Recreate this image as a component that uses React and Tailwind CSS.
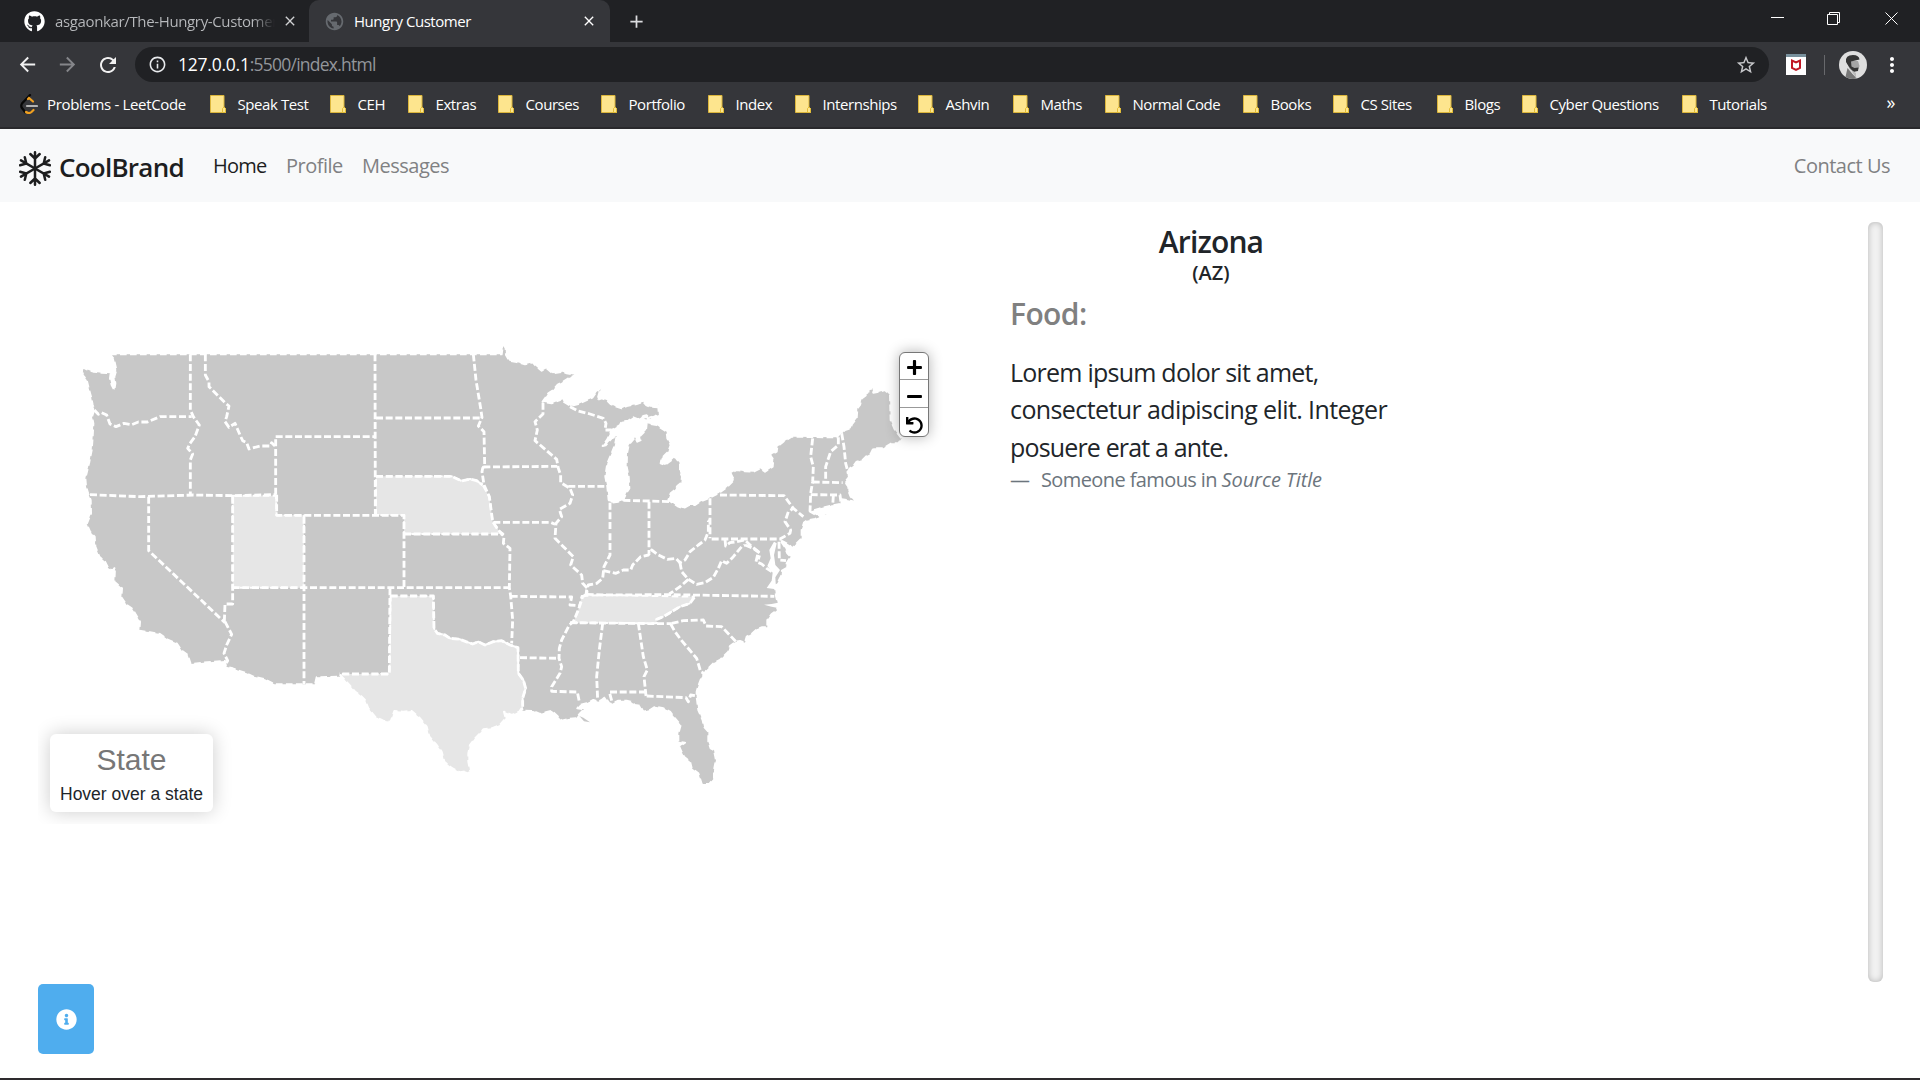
import { FaGithub, FaInfoCircle, FaPlus, FaMinus, FaUndo } from "react-icons/fa";
import { MdArrowBack, MdArrowForward, MdRefresh, MdClose, MdAdd, MdInfoOutline, MdStarOutline, MdMoreVert, MdPublic } from "react-icons/md";

const bookmarks = [
  ["Speak Test", 120], ["CEH", 78], ["Extras", 90], ["Courses", 103], ["Portfolio", 107],
  ["Index", 87], ["Internships", 123], ["Ashvin", 95], ["Maths", 92], ["Normal Code", 138],
  ["Books", 90], ["CS Sites", 104], ["Blogs", 85], ["Cyber Questions", 160], ["Tutorials", 100],
];

// Map units are a third of a pixel; each region lists its points from its own origin.
const WEST = [180, 960];
const NORTH = [1080, 990];
const SOUTH = [1080, 1680];
const MID = [1740, 1470];
const EAST = [1920, 990];

const place = ([ox, oy], text) =>
  text.trim().split(/\s+/).map((p) => {
    const [x, y] = p.split(",").map(Number);
    return `${x + ox},${y + oy}`;
  });

const coast = [
  ...place(WEST, "150,103 1020,103"),
  ...place(NORTH, "425,73 427,58 432,45 437,55 438,75 448,92 470,96 495,103 518,97 530,110 545,122 560,115 578,130 608,125 620,130 648,135 625,145 605,158 592,165 580,180 565,190 555,205 548,215 575,220 600,210 605,205 612,216 632,228 655,222 680,210 697,203 710,185 725,172 718,188 712,210 725,205 740,210 752,222 765,228 785,235 800,228 830,222 850,215 858,225 870,230 893,232 895,222"),
  ...place(EAST, "55,228 57,262 45,256 30,262 20,270 8,262"),
  ...place(NORTH, "880,262 872,270 860,256 850,258 835,268 820,262 805,272 785,275 780,285 755,300 742,328 728,348 737,346 755,325 770,318 765,345 755,370 742,400 736,440 742,470 746,510 755,518 775,515 790,510 798,490 808,475 806,440 800,410 801,370 806,345 825,322 832,335 842,330 840,318 858,300"),
  ...place(EAST, "20,280 50,285 60,292 80,305 82,325 92,345 85,365 75,375 65,385 62,400 75,405 92,392 105,380 120,400 120,425 126,440 124,458 112,468 105,480 92,490 85,510 100,520 115,530 130,535 148,525 165,525 180,515 205,505 235,490 260,472 282,450 272,430 290,420 315,424 340,425 360,415 375,425 398,410 400,388 390,375 410,365 412,350 430,335 455,320 590,322 600,310 607,310 615,300 632,295 636,282 650,265 652,235 660,225 665,205 685,190 686,178 697,175 700,188 718,185 735,180 750,195 752,270 765,300 785,325 775,340 755,340 730,355 700,355 692,372 680,378 668,390 650,395 640,408 630,415 620,430 628,440 615,456 625,470 625,482 632,500 645,515 620,510 605,508 600,522 570,528 540,535 510,545 530,556 560,553 525,567 500,572 492,578 485,600 485,625 472,638 457,655"),
  ...place(MID, "637,175 628,165 610,155 600,150 614,170 622,190 632,200 620,220 618,235 606,242 605,255 593,278 585,290 588,318 595,345 590,362 575,372 562,390 562,412 545,412 530,418 515,432 500,440 495,458 480,453 468,455 450,468 445,485 420,510 400,520 380,540 365,562 358,580 352,598"),
  ...place(SOUTH, "1010,395 1010,410 1015,450 1028,480 1032,500 1045,515 1045,545 1052,565 1062,570 1068,600 1062,630 1062,655 1048,672 1025,672 1015,640 995,625 990,605 972,590 962,570 958,560 975,548 955,545 955,520 962,495 945,475 930,455 910,445 885,440 870,450 850,455 840,437 825,435 812,425 800,422 775,422 755,432 748,430 735,412 725,420 715,425 700,420 680,430 660,435 652,445 672,448 660,460 648,475 625,477 605,482 592,468 575,452 558,457 540,462 520,453 488,452 474,400 100,340"),
  ...place(WEST, "833,1070 770,1072 765,1093 643,1093 615,1078 580,1070 560,1060 535,1052 518,1045 498,1040 495,1023 430,1028 392,1032 383,1005 365,992 350,970 325,960 300,942 270,937 238,932 240,905 222,875 215,865 200,855 184,832 186,805 163,785 165,742 158,752 145,745 135,725 118,710 106,680 104,650 90,635 80,612 93,580 92,540 85,522 78,500 76,475 82,450 88,425 95,390 98,350 100,310 96,290 103,268 98,255 93,230 86,205 80,180 68,165 70,142 80,148 100,155 125,158 152,160 150,175 155,195 163,210 166,190 163,170 169,150 162,118"),
].join(" ");

const lightStates = [
  place(WEST, "518,527 648,527 650,586 732,586 732,803 518,803"),
  place(NORTH, "48,439 275,439 305,453 330,447 350,452 368,465 388,500 398,575 415,600 430,612 132,612 132,555 48,555"),
  place(SOUTH, "665,108 730,105 1002,110 990,130 960,140 930,158 910,170 890,178 890,190 640,188 655,150"),
  place(SOUTH, "92,108 220,108 222,205 232,220 255,225 270,235 300,238 318,245 338,252 355,245 375,255 400,245 425,242 450,255 474,263 475,340 490,360 497,385 488,415 488,440 478,455 455,465 432,455 437,475 420,495 395,505 370,508 360,520 345,535 330,555 325,580 325,605 332,640 315,634 300,637 275,624 253,605 245,575 230,555 208,530 200,500 180,475 155,453 130,455 103,453 92,485 70,482 45,470 25,445 15,420 0,405 -15,395 -32,375 -62,342 88,342"),
].map((p) => p.join(" "));

const borders = [
  [WEST, "103,270 115,283 125,278 140,285 150,312 168,320 192,310 215,314 235,306 262,306 300,290 395,290"],
  [WEST, "391,103 391,270 400,290 418,315 405,350 390,370 383,385 398,402 391,420 391,522"],
  [WEST, "436,103 436,165 447,185 447,200 497,250 507,258 500,290 495,305 507,322 525,310 540,345 548,362 560,368 567,387 600,378 630,378 635,368 645,378"],
  [WEST, "90,524 240,530 400,525 520,527 648,524"],
  [WEST, "647,524 647,350 945,350"],
  [WEST, "945,103 946,586"],
  [WEST, "650,524 650,586 1032,586 1032,803"],
  [WEST, "266,530 266,692 495,908"],
  [WEST, "518,530 518,852 495,852 493,905"],
  [WEST, "495,905 515,943 500,975 492,1000 503,1022 495,1035"],
  [WEST, "518,803 1345,803"],
  [WEST, "732,590 732,1093"],
  [WEST, "990,805 988,1062 838,1062"],
  [NORTH, "48,264 362,264"],
  [NORTH, "340,73 348,150 362,235 366,262 355,288 372,305 374,405 368,415 366,425 372,465 388,500 398,575 415,600 432,620 430,640 450,655 448,773 452,798 458,870 455,940"],
  [NORTH, "48,439 275,439 305,453 330,447 350,452 368,465"],
  [NORTH, "370,411 592,409"],
  [NORTH, "549,218 549,252 525,275 532,300 525,332 560,362 590,388 595,415 602,435 602,458 630,475 638,495 630,520 598,538 605,560 588,580 585,625 615,655 640,680 632,705 665,735 668,760 682,775 680,793"],
  [NORTH, "625,469 740,469"],
  [NORTH, "750,518 750,600"],
  [NORTH, "400,577 572,577 585,583"],
  [NORTH, "132,612 430,612"],
  [NORTH, "630,230 655,243 690,252 730,265 738,280 735,300 755,300"],
  [NORTH, "790,511 940,515"],
  [SOUTH, "92,108 220,108 222,205 232,220 255,225 270,235 300,238 318,245 338,252 355,245 375,255 400,245 425,242 450,255 474,263 475,340 490,360 497,385 488,415 488,440"],
  [SOUTH, "452,109 635,111 630,135 655,137"],
  [SOUTH, "680,103 668,110 655,150 640,185 628,195 605,240 598,265 597,295 605,320 600,340 575,380 575,394 652,396 658,425"],
  [SOUTH, "680,103 730,105 925,104 1243,109"],
  [SOUTH, "480,293 597,295"],
  [SOUTH, "630,188 890,191 935,191"],
  [SOUTH, "728,190 718,270 710,350 713,420"],
  [SOUTH, "835,190 850,290 862,330 852,350 858,408"],
  [SOUTH, "755,422 748,396 855,396"],
  [SOUTH, "860,408 978,413 985,425 992,405 1012,408"],
  [MID, "343,322 330,340 300,350 270,368 250,380 230,388 230,402"],
  [MID, "275,400 310,392 370,390 378,408 425,410 468,455"],
  [MID, "272,402 285,425 305,452 350,505 362,545 375,552"],
  [MID, "90,130 90,195 72,230 68,265 50,280 25,285 20,300 18,315"],
  [MID, "70,242 108,250 130,240 152,240 158,225 182,200 205,195 215,180 235,195 262,208 288,205 300,218 315,210 330,185 355,165 375,150 385,125 385,95 390,90"],
  [MID, "390,25 390,145"],
  [MID, "207,35 207,190"],
  [MID, "300,218 305,245 325,268 300,290 268,312"],
  [MID, "325,268 350,283 375,278 400,262 415,235 425,212 440,220 460,200 485,170 495,165"],
  [MID, "435,148 437,168 450,158 470,155 495,150 510,165 535,185 528,215 545,222 560,235 575,245"],
  [MID, "495,165 520,175 540,190 535,208"],
  [MID, "395,147 600,147 630,130 632,120 615,95 625,65 640,55"],
  [MID, "420,15 612,17 640,55 670,80"],
  [MID, "597,155 598,210 618,212"],
  [EAST, "518,325 512,380 520,410 518,455 512,490 510,545"],
  [EAST, "595,322 595,345 572,365 557,410 557,455"],
  [EAST, "605,310 612,350 617,400 625,430"],
  [EAST, "518,456 608,458"],
  [EAST, "512,494 600,495 603,518"],
  [EAST, "580,497 578,528"],
].map(([o, t]) => place(o, t).join(" "));

const bays = [
  place(MID, "582,155 568,180 572,205 562,228 578,248 575,272 560,294 588,298 586,262 600,240 586,225 582,195 590,160"),
  place(MID, "552,344 575,342 594,338 594,354 575,350"),
].map((p) => p.join(" "));

function Folder() {
  return (
    <svg className="h-[18px] w-4 shrink-0" viewBox="0 0 16 18">
      <path d="M.5.5h13.5v12l1.5 1v4H.5z" fill="#fde58e" stroke="#dcb63c" />
      <path d="M12.5 17.5v-4l1.5-1.5 1.5 1.5v4z" fill="#fde58e" stroke="#e3bd35" />
    </svg>
  );
}

function LeetCode() {
  return (
    <svg className="h-5 w-[18px] shrink-0" viewBox="0 0 18 20" fill="none" strokeWidth="2.2" strokeLinecap="round">
      <path d="M10 1 2 9.500Q.5 12 2 14l3 4" stroke="#070707" />
      <path d="m8 5 1-1 4 3.500M6 18q3 2 5.500 0l2-2" stroke="#f0a020" />
      <path d="M7 12h10" stroke="#b3b3b3" />
    </svg>
  );
}

function Snowflake() {
  return (
    <svg className="h-[35px] w-[32px] shrink-0" viewBox="-16 -17.5 32 35" fill="none" stroke="#1d1e1f" strokeWidth="2.5" strokeLinecap="round" strokeLinejoin="round">
      {[0, 60, 120, 180, 240, 300].map((angle) => (
        <path key={angle} transform={`rotate(${angle})`} d="M0 0v-16.200M-4.700-14.500 0-10l4.700-4.500" />
      ))}
    </svg>
  );
}

function BrowserChrome() {
  return (
    <header className="h-[129px] border-b-2 border-[#29292c] bg-[#35363a] text-white">
      <div className="flex h-[42px] bg-[#202124]">
        <div className="flex w-[309px] items-center pl-6">
          <FaGithub className="size-[21px] shrink-0" />
          <div className="ml-[10px] w-[220px] overflow-hidden whitespace-nowrap bg-linear-to-r from-[#b8babd] from-90% to-[#202124] bg-clip-text text-[15px] tracking-[-0.36px] text-transparent">asgaonkar/The-Hungry-Customer</div>
          <MdClose className="ml-[7px] size-4 shrink-0 text-[#d0d1d3]" />
        </div>
        <div className="flex w-[301px] items-center rounded-t-[10px] bg-[#35363a] pl-[15px]">
          <MdPublic className="size-[21px] text-[#666a6f]" />
          <div className="ml-[9px] w-[227px] text-[15px] tracking-[-0.46px]">Hungry Customer</div>
          <MdClose className="size-4" />
        </div>
        <div className="flex w-[52px] items-center justify-center"><MdAdd className="size-[21px] text-[#dcdde0]" /></div>
        <div className="flex-1" />
        <svg className="mr-[20px] mt-[11px] h-4 w-[129px]" viewBox="0 0 129 16" fill="none" stroke="white" strokeWidth="1">
          <path d="M0 6.500h13M56.500 3.500h10v10h-10zM58.500 3.500v-2h10v10h-2M114.500 1.500l12 12m0-12-12 12" />
        </svg>
      </div>
      <div className="flex h-[45px] items-center pl-4">
        <MdArrowBack className="size-[23px] text-[#f1f1f1]" />
        <MdArrowForward className="ml-[17px] size-[23px] text-[#85868a]" />
        <MdRefresh className="ml-[17px] size-[24px] text-[#f1f1f1]" />
        <div className="ml-[15px] flex h-[35px] w-[1634px] items-center rounded-full bg-[#202124] pl-[13px] pr-[12px]">
          <MdInfoOutline className="size-[19px] text-[#e8eaed]" />
          <div className="ml-[11px] text-[17.5px] tracking-[-0.76px] text-[#93969b]"><span className="tracking-[-0.24px] text-white">127.0.0.1</span>:5500/index.html</div>
          <div className="flex-1" />
          <MdStarOutline className="size-[22px] text-[#c6c7ca]" />
        </div>
        <svg className="ml-[17px] h-[21px] w-5" viewBox="0 0 20 21">
          <path fill="#fff" d="M0 1h20v20H0z" />
          <path fill="#78909c" d="M0 0h20v3H0z" />
          <path d="M6 6.500v7.500l4 2 4-2V6.500l-4 2z" fill="none" stroke="#c01725" strokeWidth="2" />
        </svg>
        <div className="ml-[18px] h-5 w-px bg-[#68696c]" />
        <svg className="ml-[14px] size-7" viewBox="0 0 28 28">
          <clipPath id="avatar"><circle cx="14" cy="14" r="14" /></clipPath>
          <g clipPath="url(#avatar)">
            <path fill="#dedede" d="M0 0h28v28H0z" />
            <path fill="#a5a5a5" d="M10 10h9l1.500 5-1 3-4 3-5-3z" />
            <path fill="#353535" d="M7 11q-1-7 7-7 6 0 6.500 4.500L12 10.500l.5 5 3 1.500 4-.5-.5 3.500-4.500.8L10 16z" />
            <path fill="#777" d="m8.500 17 5 6 5 5H6z" />
            <path fill="#bbb" d="m12 19 5 3v5z" />
          </g>
        </svg>
        <MdMoreVert className="ml-[13px] size-6" />
      </div>
      <div className="flex h-[40px] items-center pb-[6px] pl-5 text-[15px] tracking-[-0.42px]">
        <div className="flex w-[190px] shrink-0 items-center gap-[9px] whitespace-nowrap tracking-[-0.34px]"><LeetCode />Problems - LeetCode</div>
        {bookmarks.map(([name, width]) => (
          <div key={name} className="flex shrink-0 items-center gap-[11.5px] whitespace-nowrap" style={{ width }}><Folder />{name}</div>
        ))}
        <div className="ml-auto pb-1 pr-[25px] text-[18px]">»</div>
      </div>
    </header>
  );
}

function UsMap() {
  return (
    <section className="relative h-[602px] w-[910px] overflow-hidden">
      <svg className="h-[602px] w-[910px]" viewBox="114 666 2730 1806" strokeLinejoin="round">
        <g stroke="white" strokeWidth="6" strokeDasharray="20 10">
          <polygon points={coast} fill="#c8c8c8" />
          <polygon points={place(SOUTH, "658,468 670,473 690,487 672,484").join(" ")} fill="#c8c8c8" stroke="none" />
          {lightStates.map((points) => <polygon key={points} points={points} fill="#e6e6e6" />)}
        </g>
        <g fill="none" stroke="white" strokeWidth="8.500" strokeDasharray="21 8">
          {borders.map((points) => <polyline key={points} points={points} />)}
        </g>
        {bays.map((points) => <polygon key={points} points={points} fill="white" />)}
      </svg>
      <div className="absolute left-[861px] top-[130px] flex h-[85px] w-[30px] flex-col divide-y divide-[#999] rounded-[6px] border border-[#777] bg-white text-black shadow-[0_0_14px_rgba(0,0,0,0.3)]">
        <div className="flex h-[27px] items-center justify-center pt-[2px]"><FaPlus className="size-[17px]" /></div>
        <div className="flex h-[28px] items-center justify-center pt-[5px]"><FaMinus className="size-[17px]" /></div>
        <div className="flex flex-1 items-center justify-center pt-[6px]"><FaUndo className="size-[17px]" /></div>
      </div>
      <div className="absolute left-3 top-[512px] flex h-[78px] w-[163px] flex-col items-center rounded-[6px] bg-white font-['Liberation_Sans',Arial,sans-serif] shadow-[0_0_19px_rgba(0,0,0,0.2)]">
        <div className="mt-[8px] text-[30px] leading-9 text-[#777]">State</div>
        <div className="mt-[5px] whitespace-nowrap text-[17.5px] leading-[22px] text-[#212529]">Hover over a state</div>
      </div>
    </section>
  );
}

function StateDetails() {
  return (
    <section className="flex w-[402px] flex-col pt-[2px] text-[#212529]">
      <h2 className="text-center text-[30px] font-semibold leading-9 tracking-[-0.85px]">Arizona</h2>
      <h3 className="text-center text-[20px] font-semibold leading-[26px] tracking-normal">(AZ)</h3>
      <h2 className="mt-[10px] text-[30px] font-semibold leading-9 tracking-[-0.6px] text-[#808080]">Food:</h2>
      <blockquote className="mt-[22px] whitespace-nowrap text-[25px] leading-[37.3px] tracking-[-0.6px]">
        <p><span className="tracking-[-0.76px]">Lorem ipsum dolor sit amet,</span><br />consectetur adipiscing elit. Integer<br /><span className="tracking-[-0.84px]">posuere erat a ante.</span></p>
        <footer className="-mt-px flex text-[20px] leading-[30px] tracking-[-0.6px] text-[#6c757d]"><span className="w-[31px]">—</span>Someone famous in&nbsp;<cite className="tracking-[-0.1px]">Source Title</cite></footer>
      </blockquote>
    </section>
  );
}

export default function App() {
  return (
    <div className="flex h-[1080px] w-[1920px] flex-col overflow-hidden border-b-2 border-[#2e2b2e] bg-white font-['Open_Sans','Noto_Sans',sans-serif]">
      <BrowserChrome />
      <nav className="flex h-[73px] shrink-0 items-center bg-[#f8f9fa] pl-[19px] pr-[30px] pt-px text-[20px] tracking-[-0.5px] text-[#808183]">
        <div className="pt-[5px]"><Snowflake /></div>
        <div className="ml-[8px] w-[154px] whitespace-nowrap pt-[2px] text-[26px] font-semibold tracking-[-0.75px] text-[#1d1e1f]">CoolBrand</div>
        <div className="w-[73px] tracking-[-0.8px] text-[#1d1e1f]">Home</div>
        <div className="w-[76px]">Profile</div>
        <div className="flex-1">Messages</div>
        <div>Contact Us</div>
      </nav>
      <main className="flex h-[876px] pl-[38px] pt-5">
        <div className="flex w-[972px] flex-col">
          <UsMap />
          <button className="mt-[160px] flex h-[70px] w-14 items-center justify-center rounded-[5px] bg-[#4fadee] text-white"><FaInfoCircle className="size-[21px]" /></button>
        </div>
        <StateDetails />
        <div className="ml-[456px] h-[760px] w-[15px] rounded-[6px] bg-[#f1f1f1] shadow-[inset_0_0_6px_rgba(0,0,0,0.25)]" />
      </main>
    </div>
  );
}
